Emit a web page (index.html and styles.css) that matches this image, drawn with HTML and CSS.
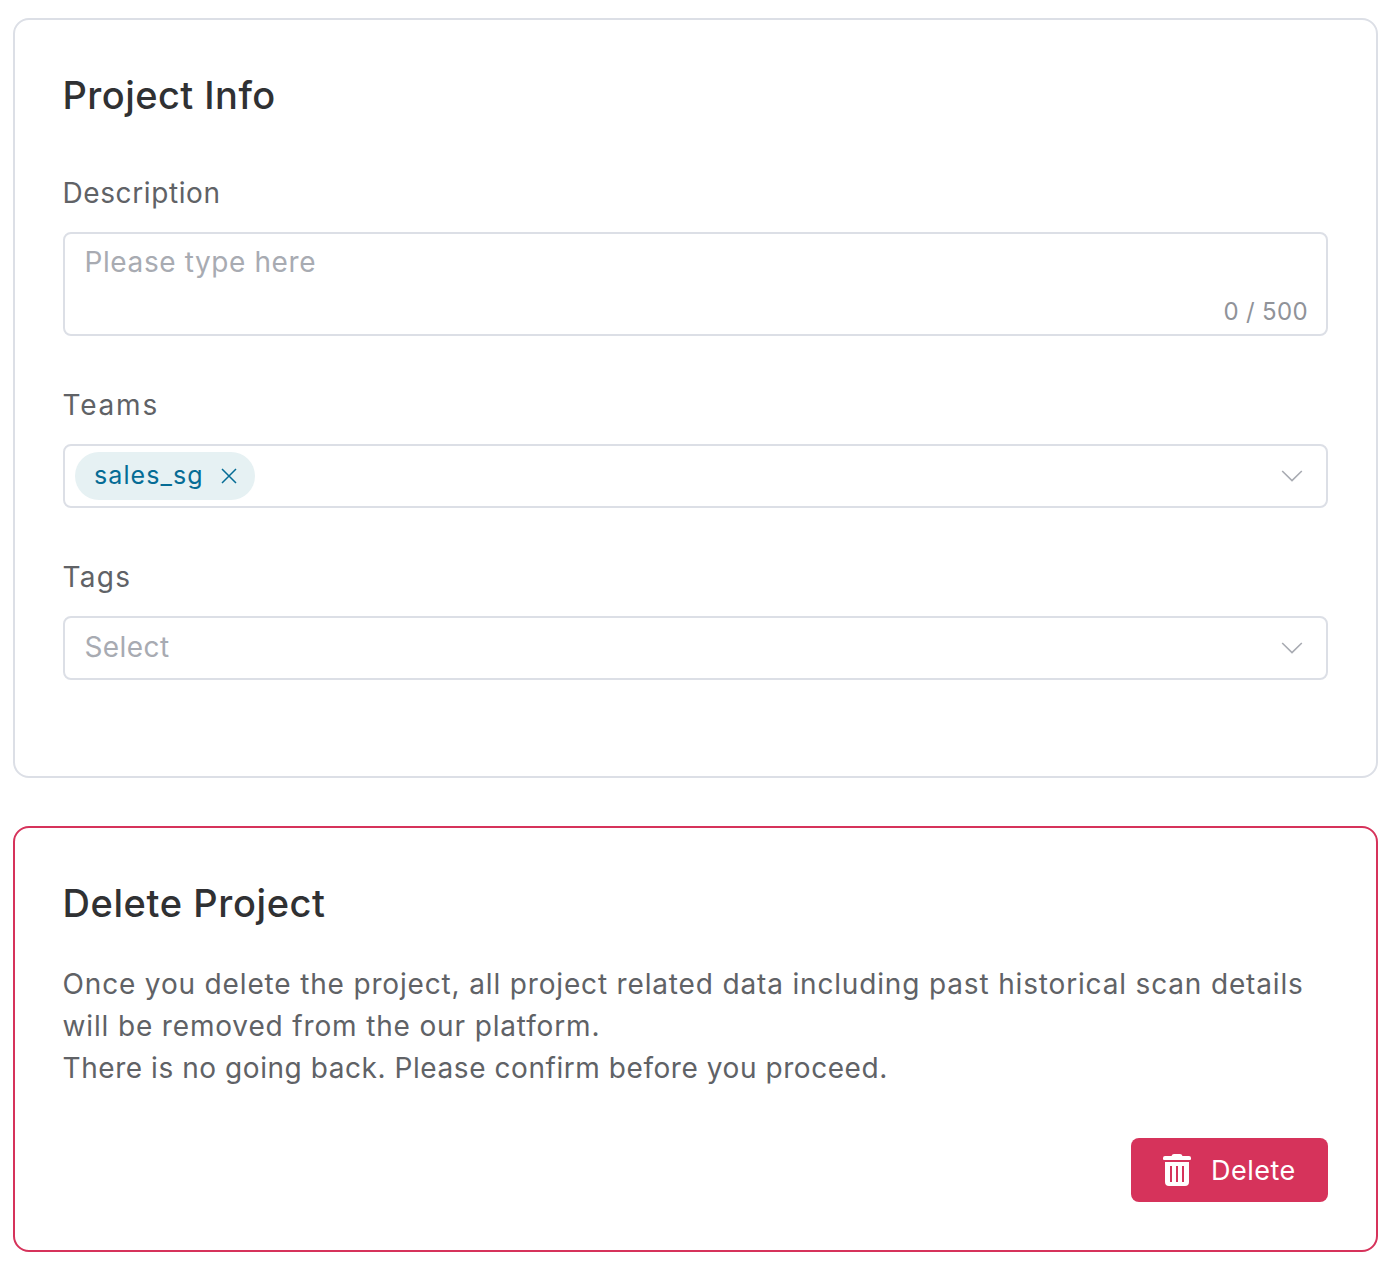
FILE: index.html
```html
<!DOCTYPE html>
<html lang="en">
<head>
<meta charset="utf-8">
<title>Project Settings</title>
<link rel="stylesheet" href="styles.css">
</head>
<body>
<main class="page">
  <section class="card">
    <h2 class="card-title"><span class="t-info">Project Info</span></h2>
    <div class="field">
      <div class="label"><span class="t-desc">Description</span></div>
      <div class="control textarea">
        <span class="placeholder t-type">Please type here</span>
        <span class="counter t-count">0 / 500</span>
      </div>
    </div>
    <div class="field">
      <div class="label"><span class="t-teams">Teams</span></div>
      <div class="control select has-chip">
        <span class="chip">
          <span class="t-chip">sales_sg</span>
          <svg class="chip-close" viewBox="0 0 16 16"><path d="M1 1 15 15M15 1 1 15"/></svg>
        </span>
        <svg class="chevron" viewBox="0 0 22 14"><path d="M1.2 2 11 11.6 20.8 2"/></svg>
      </div>
    </div>
    <div class="field">
      <div class="label"><span class="t-tags">Tags</span></div>
      <div class="control select">
        <span class="placeholder t-select">Select</span>
        <svg class="chevron" viewBox="0 0 22 14"><path d="M1.2 2 11 11.6 20.8 2"/></svg>
      </div>
    </div>
  </section>
  <section class="card danger">
    <h2 class="card-title"><span class="t-delproj">Delete Project</span></h2>
    <p class="message">
      <span class="t-line1">Once you delete the project, all project related data including past historical scan details</span><br>
      <span class="t-line2">will be removed from the our platform.</span><br>
      <span class="t-line3">There is no going back. Please confirm before you proceed.</span>
    </p>
    <div class="actions">
      <button class="delete-button" type="button">
        <svg class="trash" viewBox="0 0 28 32"><path fill-rule="evenodd" d="M2 2H8.5Q9 0 11 0H17Q19 0 19.5 2H26Q28 2 28 4V5Q28 6 27 6H1Q0 6 0 5V4Q0 2 2 2ZM2 8H26V28Q26 32 22 32H6Q2 32 2 28ZM7 12V28H9V12ZM13 12V28H15V12ZM19 12V28H21V12Z"/></svg>
        <span class="t-del">Delete</span>
      </button>
    </div>
  </section>
</main>
</body>
</html>
```
FILE: styles.css
```css
* { box-sizing: border-box; }
body { margin: 0; background: #fff; font-family: Inter, "Noto Sans", sans-serif; }
.page { display: flex; flex-direction: column; gap: 48px; padding: 18px 14px 16px 13px; height: 1268px; }
.card { height: 760px; padding: 48px; border: 2px solid #dcdfe6; border-radius: 16px; white-space: nowrap; }
.card.danger { height: 426px; border-color: #d6335b; }
.card-title { margin: 0 0 0 -0.5px; height: 60px; line-height: 55px; font-size: 38px; font-weight: 500; color: #303133; }
.field { margin-top: 49px; }
.card-title + .field { margin-top: 45px; }
.label { height: 42px; margin: 0 0 17px -0.5px; line-height: 40px; font-size: 28px; color: #606266; }
.control { display: flex; border: 2px solid #dcdfe6; border-radius: 8px; height: 64px; padding: 0 23px 0 19.5px; font-size: 28px; }
.textarea { height: 104px; padding: 8px 18px 6px 19.5px; justify-content: space-between; }
.placeholder { color: #a8abb2; line-height: 40px; }
.counter { align-self: flex-end; line-height: 32px; font-size: 24px; color: #909399; }
.select { align-items: center; justify-content: space-between; }
.select .placeholder { padding-bottom: 2px; }
.has-chip { padding-left: 10px; }
.chip { display: flex; align-items: center; justify-content: space-between; width: 180px; height: 48px; padding: 0 18px 0 19px; border-radius: 24px; background: #e6f1f3; color: #056c95; font-size: 25px; }
.chip-close { width: 16px; height: 16px; fill: none; stroke: #056c95; stroke-width: 1.5; }
.chevron { width: 22px; height: 14px; fill: none; stroke: #a8abb2; stroke-width: 1.6; }
.message { margin: 27px 0 0 -0.5px; line-height: 42px; font-size: 28px; color: #606266; }
.actions { display: flex; justify-content: flex-end; margin-top: 49px; }
.delete-button { display: flex; align-items: center; gap: 20px; width: 197px; height: 64px; padding: 0 0 0 32px; border: 0; border-radius: 8px; background: #d6335b; color: #fff; font: 400 27px Inter, "Noto Sans", sans-serif; }
.trash { width: 28px; height: 32px; fill: #fff; }

/* Tracking per text run */
.t-info { letter-spacing: 0.45px; }
.t-delproj { letter-spacing: 0.6px; }
.t-desc { letter-spacing: 0.6px; }
.t-type { letter-spacing: 0.6px; }
.t-count { letter-spacing: 0.33px; }
.t-teams { letter-spacing: 1.8px; }
.t-tags { letter-spacing: 1.3px; }
.t-select { letter-spacing: 0.4px; }
.t-chip { letter-spacing: 1.1px; line-height: 30px; padding-bottom: 2px; }
.t-line1 { letter-spacing: 0.84px; }
.t-line2 { letter-spacing: 0.85px; }
.t-line3 { letter-spacing: 0.56px; }
.t-del { letter-spacing: 0.5px; }
```
